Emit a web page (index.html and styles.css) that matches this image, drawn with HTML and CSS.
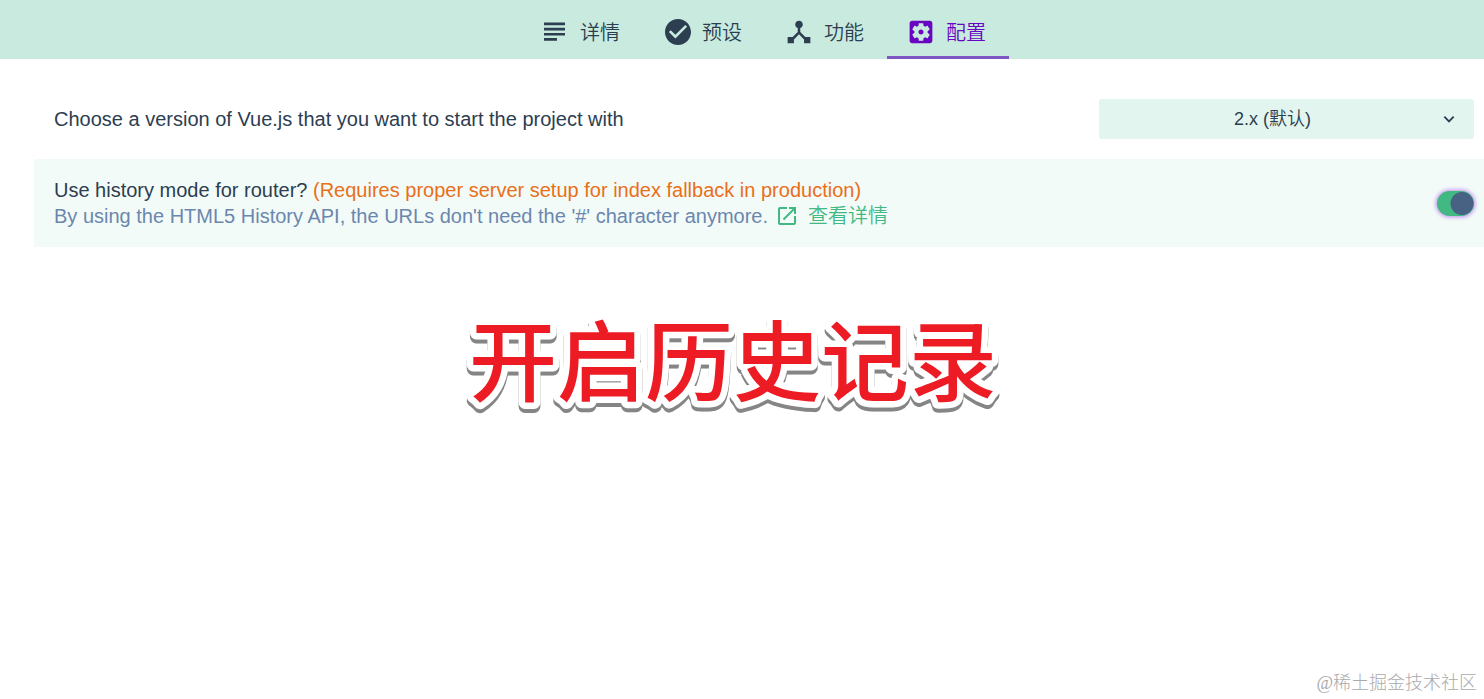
FILE: index.html
```html
<!DOCTYPE html>
<html lang="zh-CN">
<head>
    <meta charset="UTF-8">
    <meta name="viewport" content="width=device-width, initial-scale=1.0">
    <title>配置</title>
    <link rel="stylesheet" href="styles.css">
</head>
<body>
    <nav class="tabs">
        <button type="button" class="tab">
            <svg class="icon" viewBox="0 0 24 24"><path d="M1 2.500h21v2.700H1zM1 7.700h21v2.700H1zM1 12.900h21v2.700H1zM1 18.100h13v2.700H1z"/></svg>
            <span>详情</span>
        </button>
        <button type="button" class="tab">
            <svg class="icon icon-check" viewBox="2 2 20 20"><path d="M12 2C6.480 2 2 6.480 2 12s4.480 10 10 10 10-4.480 10-10S17.520 2 12 2zm-2 15l-5-5 1.410-1.410L10 14.170l7.590-7.590L19 8l-9 9z"/></svg>
            <span>预设</span>
        </button>
        <button type="button" class="tab">
            <svg class="icon" viewBox="2.500 2.500 19 19"><path d="M17 16l-4-4V8.820C14.160 8.400 15 7.300 15 6c0-1.660-1.340-3-3-3S9 4.340 9 6c0 1.300.840 2.400 2 2.820V12l-4 4H3v5h5v-3.050l4-4.200 4 4.200V21h5v-5h-4z"/></svg>
            <span>功能</span>
        </button>
        <button type="button" class="tab active">
            <svg class="icon" viewBox="2.500 2.500 19 19"><path d="M12 10c-1.100 0-2 .900-2 2s.900 2 2 2 2-.900 2-2-.900-2-2-2zm7-7H5c-1.110 0-2 .900-2 2v14c0 1.100.890 2 2 2h14c1.110 0 2-.900 2-2V5c0-1.100-.890-2-2-2zm-1.750 9c0 .230-.020.460-.050.680l1.480 1.160c.130.110.170.300.080.450l-1.400 2.420c-.090.150-.270.210-.430.150l-1.740-.700c-.360.280-.760.510-1.180.690l-.260 1.850c-.030.170-.180.300-.350.300h-2.800c-.170 0-.320-.130-.350-.290l-.260-1.850c-.430-.180-.820-.410-1.180-.690l-1.740.700c-.160.060-.340 0-.430-.150l-1.400-2.420c-.090-.150-.050-.340.080-.450l1.480-1.160c-.030-.230-.050-.460-.050-.690s.020-.460.050-.680l-1.480-1.160c-.130-.110-.170-.300-.080-.450l1.400-2.420c.090-.150.270-.210.430-.150l1.740.700c.360-.280.760-.510 1.180-.690l.260-1.850c.030-.170.180-.300.350-.300h2.800c.170 0 .320.130.350.290l.260 1.850c.430.180.820.410 1.180.690l1.740-.700c.160-.060.340 0 .430.150l1.400 2.420c.090.150.050.340-.080.450l-1.480 1.160c.030.230.050.460.050.690z"/></svg>
            <span>配置</span>
        </button>
    </nav>

    <main class="content">
        <div class="prompt">
            <label class="prompt-text" for="vue-version">Choose a version of Vue.js that you want to start the project with</label>
            <div class="select-box">
                <select id="vue-version">
                    <option>2.x (默认)</option>
                    <option>3.x</option>
                </select>
                <svg class="arrow" viewBox="0 0 12 12"><path d="M2 4l4 4 4-4"/></svg>
            </div>
        </div>

        <div class="prompt highlight">
            <div class="prompt-text">
                <label for="history-mode">Use history mode for router? <span class="warning">(Requires proper server setup for index fallback in production)</span></label>
                <div class="description">
                    <span>By using the HTML5 History API, the URLs don't need the '#' character anymore.</span>
                    <a href="#">
                        <svg class="link-icon" viewBox="3 3 18 18"><path d="M19 19H5V5h7V3H5c-1.110 0-2 .900-2 2v14c0 1.100.890 2 2 2h14c1.100 0 2-.900 2-2v-7h-2v7zM14 3v2h3.590l-9.830 9.830 1.410 1.410L19 6.410V10h2V3h-7z"/></svg>
                        <span>查看详情</span>
                    </a>
                </div>
            </div>
            <input type="checkbox" id="history-mode" class="switch" checked>
        </div>

        <!-- SVG text so the outline gets round corners -->
        <h1 class="caption">
            <svg width="560" height="130">
                <text x="280" y="97" text-anchor="middle">开启历史记录</text>
            </svg>
        </h1>
    </main>

    <footer class="watermark">@稀土掘金技术社区</footer>
</body>
</html>
```
FILE: styles.css
```css
:root {
    --dark: #2c3e50;
    --green: #42b983;
    --purple: #6806c1;
    --blue-gray: #6b87ad;
    --orange: #e96f1a;
}

* {
    margin: 0;
    padding: 0;
    box-sizing: border-box;
}

body {
    min-height: 100vh;
    display: flex;
    flex-direction: column;
    background-color: white;
    color: var(--dark);
    font-family: "Liberation Sans", "Noto Sans CJK SC", sans-serif;
    font-size: 20px;
    line-height: 26px;
}

button, select {
    border: none;
    color: inherit;
    font-family: inherit;
    cursor: pointer;
}

.tabs {
    display: flex;
    justify-content: center;
    padding-left: 46px;
    background-color: #c9ebdf;
}

.tab {
    width: 122px;
    height: 59px;
    display: flex;
    align-items: center;
    justify-content: center;
    gap: 13px;
    padding: 7px 1px 0 0;
    border-bottom: 3px solid transparent;
    background: none;
    font-size: 20px;
    font-weight: 350;
}

.tab.active {
    color: var(--purple);
    border-bottom-color: #7e57c2;
}

.icon {
    width: 24px;
    height: 24px;
    fill: currentColor;
}

.icon-check {
    width: 26px;
    height: 26px;
    margin-right: -2px;
}

.content {
    padding: 20px 0 0 34px;
}

.prompt {
    display: flex;
    align-items: center;
    justify-content: space-between;
    gap: 20px;
    padding: 20px 10px 20px 20px;
}

.highlight {
    padding-top: 18px;
    padding-bottom: 18px;
    background-color: #f3fbf8;
}

.select-box {
    display: grid;
    align-items: center;
    width: 375px;
}

.select-box select,
.arrow {
    grid-area: 1 / 1;
}

.select-box select {
    height: 40px;
    padding-right: 28px;
    border-radius: 3px;
    appearance: none;
    background-color: #e3f5ef;
    font-size: 18px;
    font-weight: 350;
    text-align-last: center;
}

.arrow {
    justify-self: end;
    width: 14px;
    height: 14px;
    margin-right: 18px;
    fill: none;
    stroke: var(--dark);
    stroke-width: 1.6;
    pointer-events: none;
}

.warning {
    color: var(--orange);
}

.description {
    display: flex;
    gap: 10px;
    color: var(--blue-gray);
}

.description a {
    display: flex;
    align-items: center;
    gap: 12px;
    color: var(--green);
    font-weight: 350;
    text-decoration: none;
}

.link-icon {
    width: 18px;
    height: 18px;
    fill: currentColor;
}

.switch {
    flex: none;
    width: 37px;
    height: 25px;
    appearance: none;
    border-radius: 13px;
    background: radial-gradient(circle at 25px 50%, #486284 11px, transparent 12px) var(--green);
    box-shadow: 0 0 4px 1px #b98aea;
    cursor: pointer;
}

.caption {
    display: flex;
    justify-content: center;
    margin-top: 50px;
    padding-right: 52px;
}

.caption text {
    fill: #ed1c24;
    stroke: white;
    stroke-width: 13px;
    stroke-linejoin: round;
    paint-order: stroke fill;
    font-size: 88px;
    font-weight: 500;
    filter: drop-shadow(0 4px 0 #858585);
}

.watermark {
    margin-top: auto;
    padding: 0 7px 3px;
    color: #aaa;
    font-family: "Liberation Serif", "Noto Sans CJK SC", serif;
    font-size: 18px;
    font-weight: 300;
    text-align: right;
}
```
